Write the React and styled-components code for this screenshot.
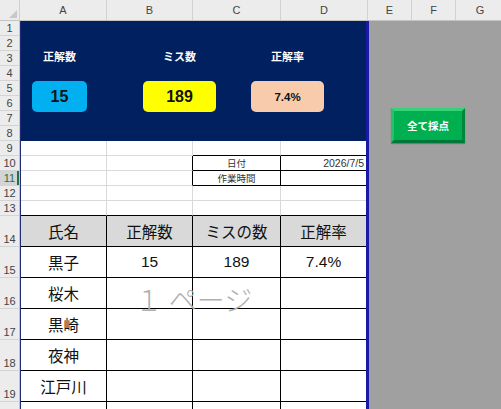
import React from "react";
import styled, { createGlobalStyle } from "styled-components";

const GlobalStyle = createGlobalStyle`
  html, body {
    margin: 0;
    padding: 0;
    overflow: hidden;
    background: #ffffff;
  }
  body {
    width: 501px;
    height: 409px;
    font-family: "Liberation Sans", "Noto Sans CJK JP", sans-serif;
  }
`;

const GRID_LINE = "#d9d9d9";
const INK = "#000000";

const COLUMNS = [
  { name: "A", w: 87 },
  { name: "B", w: 86 },
  { name: "C", w: 88 },
  { name: "D", w: 87 },
  { name: "E", w: 44 },
  { name: "F", w: 44 },
  { name: "G", w: 49 },
];

// row 20 is only a sliver at the bottom edge, so its label stays hidden
const ROWS = Array.from({ length: 20 }, (_, i) => ({
  n: i + 1,
  h: i < 13 ? 15 : 31,
  label: i < 19 ? String(i + 1) : "",
}));

const Frame = styled.div`
  width: 501px;
  height: 409px;
  overflow: hidden;
  display: flex;
  flex-direction: column;
`;

const HeaderRow = styled.div`
  display: flex;
  height: 21px;
  flex: none;
  background: #ececec;
  border-bottom: 1px solid #c4c4c4;
  box-sizing: border-box;
`;

const Corner = styled.div`
  width: 20px;
  flex: none;
  display: flex;
  align-items: flex-end;
  justify-content: flex-end;
  padding: 0 2px 2px 0;
  box-sizing: border-box;
  border-right: 1px solid #d0d0d0;
`;

const ColHead = styled.div`
  width: ${(p) => p.$w}px;
  flex: none;
  box-sizing: border-box;
  border-right: 1px solid #d2d2d2;
  display: flex;
  align-items: center;
  justify-content: center;
  font-size: 11px;
  color: #444;
`;

const Body = styled.div`
  display: flex;
  flex: 1;
  min-height: 0;
`;

const RowHeads = styled.div`
  width: 20px;
  flex: none;
  background: #ececec;
  border-right: 1px solid #c4c4c4;
  box-sizing: border-box;
`;

const RowHead = styled.div`
  height: ${(p) => p.$h}px;
  box-sizing: border-box;
  border-bottom: 1px solid #d4d4d4;
  display: flex;
  justify-content: center;
  align-items: ${(p) => (p.$tall ? "flex-end" : "center")};
  padding-bottom: ${(p) => (p.$tall ? 1 : 0)}px;
  font-size: 11px;
  color: ${(p) => (p.$active ? "#217346" : "#444")};
  background: ${(p) => (p.$active ? "#d4d4d4" : "transparent")};
  box-shadow: ${(p) => (p.$active ? "inset -2px 0 0 #217346" : "none")};
`;

const PrintArea = styled.div`
  position: relative;
  width: 349px;
  flex: none;
  box-sizing: border-box;
  border-left: 1px solid #1f2a78;
  border-right: 3px solid #1a1aa6;
  background: #ffffff;
`;

const Banner = styled.div`
  height: 120px;
  background: #002060;
  display: flex;
  align-items: flex-start;
  padding-top: 29px;
  box-sizing: border-box;
`;

const Card = styled.div`
  width: ${(p) => p.$w}px;
  margin-left: ${(p) => p.$ml}px;
  display: flex;
  flex-direction: column;
  align-items: center;
`;

const CardLabel = styled.div`
  height: 14px;
  line-height: 14px;
  font-size: 11px;
  font-weight: 700;
  color: #ffffff;
  white-space: nowrap;
`;

const CardValue = styled.div`
  margin-top: 17px;
  width: 100%;
  height: 31px;
  border-radius: 5px;
  background: ${(p) => p.$bg};
  display: flex;
  align-items: center;
  justify-content: center;
  font-size: ${(p) => p.$fs}px;
  font-weight: 700;
  color: #111;
`;

const Sheet = styled.div`
  display: grid;
  grid-template-columns: 86px 86px 88px 85px;
`;

const Cell = styled.div`
  box-sizing: border-box;
  height: ${(p) => p.$h}px;
  border-right: ${(p) => (p.$r ? `1px solid ${p.$r}` : "none")};
  border-bottom: 1px solid ${(p) => p.$b};
  background: ${(p) => p.$bg || "transparent"};
  display: flex;
  align-items: center;
  justify-content: ${(p) => (p.$align === "right" ? "flex-end" : "center")};
  padding-right: ${(p) => (p.$align === "right" ? 2 : 0)}px;
  font-size: ${(p) => p.$fs}px;
  color: ${(p) => (p.$fs < 12 ? "#333" : "#111")};
  white-space: nowrap;
  overflow: hidden;
`;

const Watermark = styled.div`
  position: absolute;
  left: 0;
  right: 0;
  top: 262px;
  text-align: center;
  font-family: "Noto Sans CJK JP", sans-serif;
  font-size: 28px;
  font-weight: 300;
  line-height: 32px;
  color: #b0b0b0;
  pointer-events: none;
`;

const Outside = styled.div`
  flex: 1;
  background: #a0a0a0;
  padding: 87px 0 0 22px;
  box-sizing: border-box;
`;

const ScoreButton = styled.div`
  width: 74px;
  height: 35px;
  box-sizing: border-box;
  background: #00b050;
  border: 3px solid;
  border-color: #36d27a #00893c #00773a #23c264;
  box-shadow: 0 1px 1px rgba(0, 0, 0, 0.25);
  display: flex;
  align-items: center;
  justify-content: center;
  color: #ffffff;
  font-size: 10.5px;
  font-weight: 700;
  font-family: "Noto Sans CJK JP", sans-serif;
`;

const g = GRID_LINE;
const k = INK;

// rows 9-13: plain grid with the small date box in C10:D11
const upperRows = [
  [{ r: g, b: g }, { r: g, b: g }, { r: g, b: k }, { b: k }],
  [
    { r: g, b: g },
    { r: k, b: g },
    { r: k, b: k, t: "日付", fs: 9.5 },
    { b: k, t: "2026/7/5", fs: 10.5, align: "right" },
  ],
  [
    { r: g, b: g },
    { r: k, b: g },
    { r: k, b: k, t: "作業時間", fs: 9.5 },
    { b: k },
  ],
  [{ r: g, b: g }, { r: g, b: g }, { r: g, b: g }, { b: g }],
  [{ r: g, b: k }, { r: g, b: k }, { r: g, b: k }, { b: k }],
];

const tableRows = [
  ["氏名", "正解数", "ミスの数", "正解率"],
  ["黒子", "15", "189", "7.4%"],
  ["桜木", "", "", ""],
  ["黒崎", "", "", ""],
  ["夜神", "", "", ""],
  ["江戸川", "", "", ""],
  ["", "", "", ""],
];

const cards = [
  { label: "正解数", value: "15", w: 55, ml: 11, bg: "#00b0f0", fs: 16 },
  { label: "ミス数", value: "189", w: 73, ml: 56, bg: "#ffff00", fs: 16 },
  { label: "正解率", value: "7.4%", w: 73, ml: 35, bg: "#f8cbad", fs: 11.5 },
];

const CornerMark = () => (
  <svg width="8" height="8" viewBox="0 0 8 8">
    <polygon points="8,0 8,8 0,8" fill="#c8c8c8" />
  </svg>
);

export default function App() {
  return (
    <Frame>
      <GlobalStyle />
      <HeaderRow>
        <Corner>
          <CornerMark />
        </Corner>
        {COLUMNS.map((c) => (
          <ColHead key={c.name} $w={c.w}>
            {c.name}
          </ColHead>
        ))}
      </HeaderRow>
      <Body>
        <RowHeads>
          {ROWS.map((r) => (
            <RowHead key={r.n} $h={r.h} $tall={r.h > 15} $active={r.n === 11}>
              {r.label}
            </RowHead>
          ))}
        </RowHeads>
        <PrintArea>
          <Banner>
            {cards.map((c) => (
              <Card key={c.label} $w={c.w} $ml={c.ml}>
                <CardLabel>{c.label}</CardLabel>
                <CardValue $bg={c.bg} $fs={c.fs}>
                  {c.value}
                </CardValue>
              </Card>
            ))}
          </Banner>
          <Sheet>
            {upperRows.map((row, ri) =>
              row.map((c, ci) => (
                <Cell
                  key={`u${ri}-${ci}`}
                  $h={15}
                  $r={c.r}
                  $b={c.b}
                  $fs={c.fs || 11}
                  $align={c.align}
                >
                  {c.t}
                </Cell>
              ))
            )}
            {tableRows.map((row, ri) =>
              row.map((t, ci) => (
                <Cell
                  key={`t${ri}-${ci}`}
                  $h={31}
                  $r={ci < 3 ? k : null}
                  $b={k}
                  $bg={ri === 0 ? "#d9d9d9" : null}
                  $fs={15.5}
                >
                  {t}
                </Cell>
              ))
            )}
          </Sheet>
          <Watermark>１ ページ</Watermark>
        </PrintArea>
        <Outside>
          <ScoreButton>全て採点</ScoreButton>
        </Outside>
      </Body>
    </Frame>
  );
}
